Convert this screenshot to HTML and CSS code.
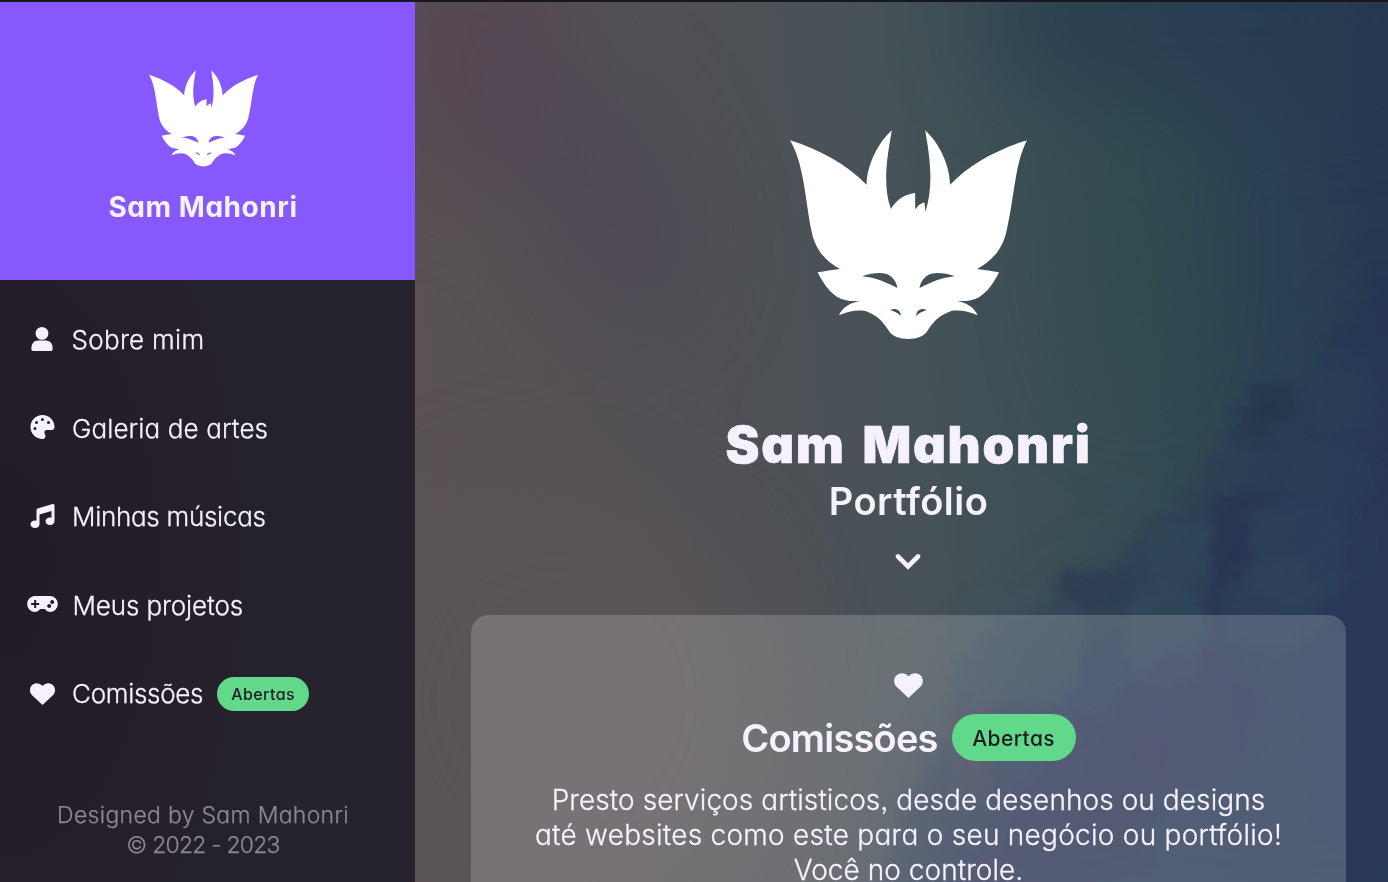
FILE: index.html
```html
<!DOCTYPE html>
<html lang="pt-BR">
<head>
<meta charset="utf-8">
<title>Sam Mahonri</title>
<link rel="stylesheet" href="styles.css">
</head>
<body>
<svg class="defs" width="0" height="0" aria-hidden="true">
  <symbol id="logo" viewBox="60 60 712 630">
    <path fill-rule="evenodd" d="M60 90C145 117 230 160 290 224C291 165 324 98 366 60C354 130 336 220 363 297C380 268 410 251 436 249L436 298C443 287 454 278 464 277L467 305C494 220 478 130 466 60C508 98 540 165 541 224C601 160 686 117 772 90C735 160 734 265 710 365C697 420 667 452 622 477C645 480 668 483 688 487C668 528 640 564 606 570Q586 575 563 573C588 577 614 592 624 616C595 603 570 599 544 603C505 617 487 640 473 663C456 696 374 696 357 663C342 640 326 617 287 603C261 599 236 603 207 616C217 592 243 577 270 573Q245 575 225 570C191 564 163 528 143 487C165 483 186 480 210 477C165 452 137 420 125 365C105 265 102 160 60 90ZM277 499C330 482 372 484 383 534C345 516 319 503 277 499ZM555 499C502 482 460 484 449 534C487 516 513 503 555 499ZM361 600C375 594 392 598 393 618C385 609 375 605 361 600ZM471 600C457 594 440 598 439 618C447 609 457 605 471 600Z"/>
  </symbol>
  <symbol id="heart" viewBox="0 0 512 448">
    <path d="M256 448L38 242C-12 194-12 108 26 58C80-12 190-18 256 58C322-18 432-12 486 58C524 108 524 194 474 242Z"/>
  </symbol>
</svg>
<svg class="backdrop" viewBox="0 0 1388 882" aria-hidden="true">
  <defs>
    <linearGradient id="sky" gradientUnits="userSpaceOnUse" x1="415" y1="340" x2="1388" y2="240">
      <stop offset="0" stop-color="#5a5255"/><stop offset=".3" stop-color="#515156"/>
      <stop offset=".5" stop-color="#465257"/><stop offset=".62" stop-color="#3c4f55"/>
      <stop offset=".75" stop-color="#324b52"/><stop offset=".88" stop-color="#2a4153"/>
      <stop offset="1" stop-color="#273852"/>
    </linearGradient>
    <filter id="soft" x="-50%" y="-50%" width="200%" height="200%" color-interpolation-filters="sRGB"><feGaussianBlur stdDeviation="45"/></filter>
    <filter id="paint" x="-20%" y="-20%" width="140%" height="140%" color-interpolation-filters="sRGB">
      <feTurbulence type="fractalNoise" baseFrequency=".03 .07" numOctaves="4" seed="4" result="n"/>
      <feGaussianBlur in="SourceGraphic" stdDeviation="4"/>
      <feDisplacementMap in2="n" scale="26" xChannelSelector="R" yChannelSelector="G"/>
      <feGaussianBlur stdDeviation="1"/>
    </filter>
  </defs>
  <rect width="1388" height="882" fill="url(#sky)"/>
  <g filter="url(#soft)">
    <ellipse cx="475" cy="50" rx="100" ry="140" fill="#554353" opacity=".65"/>
    <ellipse cx="610" cy="200" rx="75" ry="140" fill="#4c4453" opacity=".6" transform="rotate(-25 600 210)"/>
    <ellipse cx="1130" cy="260" rx="60" ry="150" fill="#304d4c" opacity=".4"/>
    <ellipse cx="1220" cy="20" rx="240" ry="90" fill="#273a50" opacity=".65"/>
    <path d="M1440 300L1330 420L1200 570L1100 620L950 740L880 950H1440Z" fill="#2b3858" opacity=".75"/>
    <ellipse cx="560" cy="700" rx="220" ry="230" fill="#5b5457" opacity=".65"/>
  </g>
  <g filter="url(#paint)">
    <path d="M1400 265L1365 280L1358 318L1330 335L1318 385L1290 395L1286 378L1254 380L1250 402L1230 415L1226 442L1206 458L1196 495L1160 515L1135 540L1110 565L1062 570L1050 600L1000 620L960 660L950 740L910 790L880 900H1460V265Z" fill="#28365a" opacity=".28"/>
    <rect x="1256" y="384" width="36" height="38" fill="#25364a" opacity=".65"/>
    <rect x="1236" y="406" width="36" height="40" fill="#25364a" opacity=".5"/>
    <path d="M1372 270H1400V350H1330V335L1362 315Z" fill="#26344f" opacity=".4"/>
    <ellipse cx="1340" cy="400" rx="34" ry="38" fill="#2b4558" opacity=".25"/>
    <ellipse cx="1330" cy="475" rx="42" ry="32" fill="#2b4558" opacity=".25"/>
    <rect x="1150" y="520" width="68" height="68" rx="25" fill="#334b5b" opacity=".4"/>
    <rect x="1250" y="505" width="95" height="100" rx="30" fill="#2d475c" opacity=".35"/>
    <path d="M1210 492H1275L1246 515L1243 612H1216Z" fill="#252f50" opacity=".5"/>
    <path d="M1060 570L1130 570L1135 605H1050Z" fill="#28364f" opacity=".35"/>
    <rect x="955" y="585" width="125" height="120" rx="35" fill="#3f5260" opacity=".3"/>
    <rect x="1125" y="585" width="80" height="100" rx="35" fill="#394f5e" opacity=".4"/>
    <rect x="1222" y="560" width="100" height="90" rx="35" fill="#334b5c" opacity=".35"/>
    <ellipse cx="1190" cy="720" rx="70" ry="70" fill="#353055" opacity=".3"/>
    <path d="M1040 770L1080 710L1170 740L1150 860L1060 900H920L1000 830Z" fill="#353055" opacity=".25"/>
    <rect x="950" y="700" width="42" height="100" rx="16" fill="#504957" opacity=".25"/>
  </g>
</svg>
<div class="page">
  <aside class="sidebar">
    <header class="brand">
      <svg class="brand-logo"><use href="#logo"/></svg>
      <div class="brand-name">Sam Mahonri</div>
    </header>
    <nav class="menu">
      <a class="item"><svg class="icon user" viewBox="0 0 22 24"><circle cx="11" cy="6.4" r="6.4"/><path d="M7 13.4h8c4 0 6.6 3.2 6.6 7.5v1.4q0 1.7-1.7 1.7H2.1Q.4 24 .4 22.3v-1.4c0-4.3 2.6-7.5 6.6-7.5z"/></svg><span class="t1">Sobre mim</span></a>
      <a class="item"><svg class="icon palette" viewBox="0 0 512 512"><path fill-rule="evenodd" d="M512 256c0 .9 0 1.8 0 2.7c-.4 36.5-33.6 61.3-70.1 61.3H344c-26.5 0-48 21.5-48 48c0 3.4 .4 6.7 1 9.9c2.1 10.2 6.5 20 10.8 29.9c6.1 13.8 12.1 27.5 12.1 42c0 31.8-21.6 60.7-53.4 62c-3.5 .1-7 .2-10.6 .2C114.6 512 0 397.4 0 256S114.6 0 256 0S512 114.6 512 256zM128 288a32 32 0 1 0 -64 0 32 32 0 1 0 64 0zm0-96a32 32 0 1 0 0-64 32 32 0 1 0 0 64zM288 96a32 32 0 1 0 -64 0 32 32 0 1 0 64 0zm96 96a32 32 0 1 0 0-64 32 32 0 1 0 0 64z"/></svg><span class="t2">Galeria de artes</span></a>
      <a class="item"><svg class="icon music" viewBox="0 0 512 512"><path d="M499.1 6.3c8.1 6 12.9 15.6 12.9 25.7v72V368c0 44.2-43 80-96 80s-96-35.8-96-80s43-80 96-80c11.2 0 22 1.6 32 4.6V147L192 223.8V432c0 44.2-43 80-96 80s-96-35.8-96-80s43-80 96-80c11.2 0 22 1.6 32 4.6V200 128c0-14.1 9.3-26.6 22.8-30.7l320-96c9.7-2.9 20.2-1.1 28.3 5z"/></svg><span class="t3">Minhas músicas</span></a>
      <a class="item"><svg class="icon pad" viewBox="0 0 92 48"><path fill-rule="evenodd" d="M24 0H68A24 24 0 0 1 68 48Q59 48 53 39H39Q33 48 24 48A24 24 0 0 1 24 0ZM21 12V21H12V27H21V36H27V27H36V21H27V12ZM66 24a6 6 0 1 0 .01 0ZM75 12a6 6 0 1 0 .01 0Z"/></svg><span class="t4">Meus projetos</span></a>
      <a class="item"><svg class="icon heart"><use href="#heart"/></svg><span class="t5">Comissões</span><span class="badge">Abertas</span></a>
    </nav>
    <footer class="credits"><span class="c1">Designed by Sam Mahonri</span><br><span class="c2">© 2022 - 2023</span></footer>
  </aside>
  <main class="main">
    <svg class="hero-logo"><use href="#logo"/></svg>
    <h1 class="title">Sam Mahonri</h1>
    <h2 class="subtitle">Portfólio</h2>
    <svg class="chevron" viewBox="0 0 26 18"><path d="M3 3.5L13 13.5L23 3.5"/></svg>
    <section class="card">
      <svg class="card-heart"><use href="#heart"/></svg>
      <div class="card-head"><h3 class="card-title">Comissões</h3><span class="badge big">Abertas</span></div>
      <p class="copy"><span class="p1">Presto serviços artisticos, desde desenhos ou designs</span><br><span class="p2">até websites como este para o seu negócio ou portfólio!</span><br><span class="p3">Você no controle.</span></p>
    </section>
  </main>
</div>
</body>
</html>
```
FILE: styles.css
```css
* { box-sizing: border-box; }
body {
  margin: 0;
  height: 882px;
  overflow: hidden;
  position: relative;
  background: #4a4c55;
  color: #f5f2fd;
  font-family: Inter, "Open Sans", sans-serif;
  font-feature-settings: "cv11", "ss03";
}
h1, h2, h3, p { margin: 0; }
svg { display: block; fill: currentColor; flex: none; }
.defs { position: absolute; }
.backdrop { position: absolute; inset: 0; width: 1388px; height: 882px; }
.page {
  position: relative;
  display: flex;
  height: 882px;
  border-top: 2px solid #171720;
}
.sidebar {
  width: 415px;
  display: flex;
  flex-direction: column;
  background: radial-gradient(ellipse 330px 620px at 0 560px, #231a27, #26232d);
}
.brand {
  height: 278px;
  padding: 68px 9px 0 0;
  display: flex;
  flex-direction: column;
  align-items: center;
  background: #8858ff;
}
.brand-logo { width: 109px; height: 97px; color: #fff; }
.brand-name { margin-top: 20px; font-size: 28px; line-height: 40px; font-weight: 700; letter-spacing: .55px; white-space: nowrap; }
.menu { padding: 15.5px 0 0 27px; }
.item {
  display: flex;
  align-items: center;
  height: 88.5px;
  font-size: 26px;
  font-weight: 300;
  -webkit-text-stroke: .3px currentColor;
  white-space: nowrap;
}
.icon { width: 25px; height: 24px; margin: 0 17px 0 3px; }
.user { width: 22px; margin: 0 18.5px 2px 4px; }
.palette { margin-bottom: 2px; }
.music { margin-bottom: 1px; }
.pad { width: 31px; height: 16px; margin: 0 14.5px 2px 0; }
.heart { height: 22px; }
.t1 { letter-spacing: .3px; }
.t2 { letter-spacing: .12px; }
.t3 { letter-spacing: -.28px; }
.t4 { letter-spacing: -.12px; }
.t5 { letter-spacing: -.3px; }
.badge {
  margin-left: 14px;
  width: 92px;
  height: 34px;
  border-radius: 17px;
  background: #62d98a;
  color: #1d1b24;
  font-size: 16px;
  line-height: 34px;
  font-weight: 500;
  letter-spacing: .4px;
  text-align: center;
  -webkit-text-stroke: 0;
}
.credits {
  margin-top: auto;
  padding: 0 9px 22px 0;
  text-align: center;
  color: #8b8791;
  font-size: 23px;
  line-height: 30px;
  font-weight: 300;
  -webkit-text-stroke: .25px currentColor;
}
.c1 { letter-spacing: .3px; }
.c2 { letter-spacing: -.8px; }
.main {
  flex: 1;
  padding: 128px 42px 0 56px;
  display: flex;
  flex-direction: column;
  align-items: center;
}
.hero-logo { width: 237px; height: 210px; color: #fff; }
.title { margin-top: 75px; font-size: 51px; line-height: 60px; font-weight: 900; letter-spacing: 1.7px; word-spacing: 5px; white-space: nowrap; -webkit-text-stroke: .6px currentColor; }
.subtitle { margin-top: 3px; font-size: 38px; line-height: 46px; font-weight: 600; letter-spacing: .45px; }
.chevron { width: 26px; height: 18px; margin: 29px 1px 0 0; fill: none; stroke: currentColor; stroke-width: 4.6; stroke-linecap: round; }
.card {
  align-self: stretch;
  flex: none;
  margin-top: 44px;
  height: 267px;
  padding-top: 58px;
  border-radius: 18px 18px 0 0;
  background: rgba(255, 255, 255, .18);
  display: flex;
  flex-direction: column;
  align-items: center;
}
.card-heart { width: 29px; height: 25px; }
.card-head { display: flex; align-items: center; margin-top: 16px; height: 47px; }
.card-title { font-size: 38px; line-height: 47px; padding-top: 2px; font-weight: 600; letter-spacing: -.8px; }
.big { width: 124px; height: 47px; border-radius: 23.5px; font-size: 21px; line-height: 49px; }
.copy { margin-top: 22px; font-size: 28px; line-height: 35px; font-weight: 300; text-align: center; white-space: nowrap; -webkit-text-stroke: .3px currentColor; }
.p1 { letter-spacing: .08px; }
.p2 { letter-spacing: .27px; }
.p3 { letter-spacing: .05px; }
```
